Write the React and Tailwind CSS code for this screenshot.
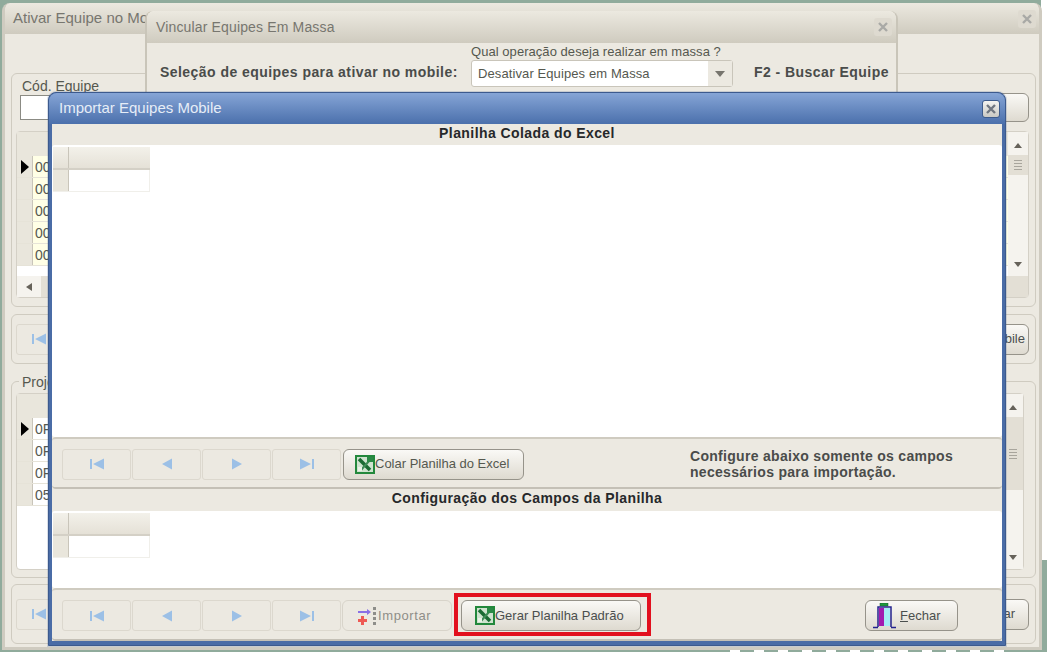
import React from 'react';

const font = { tahoma: 'font-["Liberation_Sans",sans-serif]' };

const CloseBox = ({ blue }) => (
  <div
    className={
      blue
        ? 'flex h-[18px] w-[18px] items-center justify-center rounded-[3px] border border-[#3d5c8c] bg-gradient-to-b from-[#f4f4f0] to-[#c9c9c4]'
        : 'flex h-[18px] w-[18px] items-center justify-center rounded-[3px] bg-[#dedad0]'
    }
  >
    <svg width="12" height="12" viewBox="0 0 12 12">
      <path d="M2 2 L10 10 M10 2 L2 10" stroke={blue ? '#6f7680' : '#a9a9a6'} strokeWidth="2.4" />
    </svg>
  </div>
);

const NavIcon = ({ type }) => {
  const c = '#9cc0e6';
  return (
    <svg width="16" height="14" viewBox="0 0 16 14">
      {type === 'first' && <path d="M1 2h2v10H1z M15 1.500v11L4 7z" fill={c} />}
      {type === 'prev' && <path d="M13 1.500v11L3 7z" fill={c} />}
      {type === 'next' && <path d="M3 1.500v11L13 7z" fill={c} />}
      {type === 'last' && <path d="M13 2h2v10h-2z M1 1.500v11L12 7z" fill={c} />}
    </svg>
  );
};

const NavBar = ({ w = 'w-[69px]' }) => (
  <div className="flex gap-px">
    {['first', 'prev', 'next', 'last'].map((t) => (
      <div key={t} className={`flex h-[31px] ${w} items-center justify-center rounded-[3px] border border-[#dcd8ce] bg-[#ece9e1]`}>
        <NavIcon type={t} />
      </div>
    ))}
  </div>
);

const ExcelIcon = () => (
  <svg width="20" height="19" viewBox="0 0 20 19" className="shrink-0">
    <rect x="1" y="1" width="18" height="17" fill="#cfe3cf" stroke="#23883c" strokeWidth="2" />
    <path d="M4 4 L15 15" stroke="#1b6a33" strokeWidth="3.500" />
    <path d="M15 5 L6 15" stroke="#3d8a55" strokeWidth="2" />
    <path d="M12 2h6v5h-6z" fill="#2b8a46" />
    <path d="M3 12h4v4H3z" fill="#e9f3e7" />
  </svg>
);

const ImportIcon = () => (
  <svg width="20" height="20" viewBox="0 0 20 20" className="shrink-0">
    <path d="M0 5h9V3l4 3-4 3V7H0z" fill="#8a70e6" />
    <path d="M3 10h3v3h3v3H6v3H3v-3H0v-3h3z" fill="#ee5a54" />
    <path d="M15 1h3v3h-3z M15 6h3v3h-3z M15 11h3v3h-3z M15 16h3v3h-3z" fill="#8e8e8a" />
  </svg>
);

const DoorIcon = () => (
  <svg width="24" height="26" viewBox="0 0 24 26" className="shrink-0">
    <rect x="7" y="0" width="8" height="3" fill="#1f9a3c" stroke="#14532d" strokeWidth="0.500" />
    <rect x="6" y="5" width="5" height="18" fill="#a21caf" />
    <rect x="11" y="5" width="6" height="18" fill="#a5ecf5" />
    <path d="M5 24V4h13v20 M0 24.500h5 M18 24.500h5" fill="none" stroke="#23238e" strokeWidth="1.500" />
  </svg>
);

const Btn = ({ className = '', children }) => (
  <div className={`flex h-[31px] items-center rounded-[6px] border border-[#96938a] bg-gradient-to-b from-[#faf9f6] to-[#dedad0] text-[13px] text-[#4b4f4e] ${className}`}>
    {children}
  </div>
);

const SmallGrid = () => (
  <div className="ml-px w-[97px] shrink-0">
    <div className="flex h-[23px] border-b-2 border-[#d4d0c6]">
      <div className="w-[16px] border-r border-[#c9c5ba] bg-gradient-to-b from-[#f3f1ea] to-[#e5e1d7]" />
      <div className="flex-1 bg-gradient-to-b from-[#f3f1ea] to-[#e5e1d7]" />
    </div>
    <div className="flex h-[22px] border-b border-[#f0efea]">
      <div className="w-[16px] border-r border-[#c9c5ba] bg-[#e9e6dc]" />
      <div className="flex-1 border-r border-[#f0efea] bg-white" />
    </div>
  </div>
);

const Group = ({ className = '', children }) => (
  <div className={`relative rounded-[6px] border border-[#cfcbc0] ${className}`}>{children}</div>
);

// row of the grids in the window at the back
const BackRow = ({ text, active, yellow }) => (
  <div className="flex h-[22px] border-b border-[#e6e3d8]">
    <div className="flex w-[16px] shrink-0 items-center justify-center border-r border-[#c9c5ba] bg-[#e9e6dc]">
      {active && (
        <svg width="8" height="14" viewBox="0 0 8 14">
          <path d="M0 0 L8 7 L0 14z" fill="#000" />
        </svg>
      )}
    </div>
    <div className={`flex-1 pl-[2px] text-[14px] leading-[22px] text-[#55584f] ${yellow ? 'bg-[#ffffe6]' : 'bg-white'}`}>{text}</div>
  </div>
);

const Scrollbar = ({ thumb, className = '' }) => (
  <div className={`flex w-[20px] shrink-0 flex-col items-center bg-[#f5f3ee] ${className}`}>
    <svg width="10" height="8" viewBox="0 0 10 8" className="mt-[10px]">
      <path d="M5 1 L9 6 H1z" fill="#66625a" />
    </svg>
    <div className={`mt-[5px] flex ${thumb} w-full flex-col items-center justify-center gap-[2px] bg-[#e3dfd5]`}>
      <div className="h-px w-[8px] bg-[#a8a59c]" />
      <div className="h-px w-[8px] bg-[#a8a59c]" />
      <div className="h-px w-[8px] bg-[#a8a59c]" />
      <div className="h-px w-[8px] bg-[#a8a59c]" />
    </div>
    <svg width="10" height="8" viewBox="0 0 10 8" className="mb-[8px] mt-auto">
      <path d="M5 7 L9 2 H1z" fill="#66625a" />
    </svg>
  </div>
);

const BackWindow = () => (
  <div className="absolute left-[2px] top-[3px] flex h-[647px] w-[1040px] flex-col rounded-t-[8px] border-x-[3px] border-b-[3px] border-[#cfcbc0] bg-[#ece9e1]">
    <div className="flex h-[31px] shrink-0 items-center justify-between rounded-t-[8px] bg-gradient-to-b from-[#ecE9e0] to-[#cfcbbf] pl-[8px] pr-[3px] text-[15px] text-[#77766f]">
      <span>Ativar Equipe no Mobile</span>
      <CloseBox />
    </div>
    <Group className="ml-[6px] mr-[3px] mt-[39px] h-[234px] shrink-0 pl-[4px] pr-[6px]">
      <div className="ml-[6px] mt-[3px] text-[14px] leading-[18px] text-[#55584f]">Cód. Equipe</div>
      <div className="flex justify-between">
        <div className="ml-[4px] h-[25px] w-[200px] border border-[#8b8b84] bg-white" />
        <div className="mt-[-2px] h-[29px] w-[60px] rounded-[6px] border border-[#96938a] bg-gradient-to-b from-[#faf9f6] to-[#dedad0]" />
      </div>
      <div className="mt-[9px] flex h-[167px] flex-col rounded-[4px] border border-[#d4d0c6] bg-white">
        <div className="flex min-h-0 flex-1">
          <div className="flex-1">
            <div className="h-[24px] bg-[#e9e6dc]" />
            {['00', '00', '00', '00', '00'].map((t, i) => (
              <BackRow key={i} text={t} active={i === 0} yellow />
            ))}
          </div>
          <Scrollbar thumb="h-[20px]" />
        </div>
        <div className="flex h-[21px] shrink-0 items-center bg-[#e3dfd5]">
          <div className="flex h-full w-[24px] items-center justify-center bg-[#f5f3ee]">
            <svg width="8" height="10" viewBox="0 0 8 10">
              <path d="M1 5 L7 1 V9z" fill="#66625a" />
            </svg>
          </div>
        </div>
      </div>
    </Group>
    <Group className="ml-[6px] mr-[3px] mt-[7px] flex h-[50px] shrink-0 items-center justify-between pl-[4px] pr-[6px]">
      <NavBar w="w-[46px]" />
      <Btn className="w-[60px] justify-end pr-[3px]">bile</Btn>
    </Group>
    <Group className="ml-[6px] mr-[3px] mt-[17px] h-[197px] shrink-0 pl-[4px] pr-[11px]">
      <div className="absolute left-[7px] top-[-9px] bg-[#ece9e1] px-[3px] text-[14px] leading-[18px] text-[#55584f]">Projetos</div>
      <div className="mt-[11px] flex h-[177px] rounded-[4px] border border-[#d4d0c6] bg-white">
        <div className="flex-1">
          <div className="h-[24px] bg-[#e9e6dc]" />
          {['0F', '0F', '0F', '05'].map((t, i) => (
            <BackRow key={i} text={t} active={i === 0} />
          ))}
        </div>
        <Scrollbar thumb="h-[73px]" />
      </div>
    </Group>
    <Group className="ml-[6px] mr-[3px] mt-[6px] flex h-[60px] shrink-0 items-center justify-between pl-[4px] pr-[6px]">
      <NavBar w="w-[46px]" />
      <Btn className="w-[60px] justify-end pr-[13px]">ar</Btn>
    </Group>
  </div>
);

const MiddleWindow = () => (
  <div className="absolute left-[145px] top-[11px] flex h-[110px] w-[753px] flex-col rounded-t-[8px] border-x-[2px] border-[#c9c5b9] bg-[#ece9e1]">
    <div className="flex h-[32px] shrink-0 items-center justify-between rounded-t-[8px] bg-gradient-to-b from-[#ecE9e0] to-[#cfcbbf] pl-[9px] pr-[4px] text-[14px] tracking-[0.15px] text-[#77766f]">
      <span>Vincular Equipes Em Massa</span>
      <CloseBox />
    </div>
    <div className="flex items-start pl-[13px]">
      <div className="mt-[20px] w-[311px] whitespace-nowrap text-[14px] font-bold leading-[18px] tracking-[0.45px] text-[#4a4c4a]">Seleção de equipes para ativar no mobile:</div>
      <div className="w-[262px] shrink-0">
        <div className="mt-[1px] whitespace-nowrap text-[13px] leading-[16px] tracking-[0.05px] text-[#55584f]">Qual operação deseja realizar em massa ?</div>
        <div className="flex h-[27px] items-center justify-between rounded-[3px] border border-[#c9c5ba] bg-white pl-[6px] text-[13px] tracking-[0.1px] text-[#55584f]">
          <span>Desativar Equipes em Massa</span>
          <div className="flex h-full w-[24px] items-center justify-center bg-[#ece9e1]">
            <svg width="10" height="6" viewBox="0 0 10 6">
              <path d="M0 0 H10 L5 6z" fill="#77756e" />
            </svg>
          </div>
        </div>
      </div>
      <div className="ml-[21px] mt-[20px] whitespace-nowrap text-[14px] font-bold leading-[18px] tracking-[0.45px] text-[#4a4c4a]">F2 - Buscar Equipe</div>
    </div>
  </div>
);

const SectionTitle = ({ h, children }) => (
  <div className={`${h} shrink-0 text-center text-[14px] font-bold leading-[19px] tracking-[0.42px] text-[#26282a]`}>{children}</div>
);

const ToolPanel = ({ children, h }) => (
  <div className={`flex ${h} shrink-0 items-center rounded-[4px] border-y-2 border-t-[#cfcbc0] border-b-[#c4c0b6] pl-[10px] pr-[2px] pt-[2px]`}>{children}</div>
);

const FrontWindow = () => (
  <div className="absolute left-[48px] top-[92px] flex h-[554px] w-[958px] flex-col rounded-t-[8px] border border-[#3c5a8e] bg-[#4a6ca6] shadow-[0_0_0_1px_rgba(60,90,140,0.2)]">
    <div className="flex h-[31px] shrink-0 items-center justify-between rounded-t-[8px] bg-gradient-to-b from-[#86a5d6] to-[#4b70ac] pl-[10px] pr-[5px] text-[15px] text-[#e6edf7]">
      <span>Importar Equipes Mobile</span>
      <CloseBox blue />
    </div>
    <div className="mx-[3px] mb-[4px] flex min-h-0 flex-1 flex-col bg-[#ece9e1]">
      <SectionTitle h="h-[21px]">Planilha Colada do Excel</SectionTitle>
      <div className="flex h-[292px] shrink-0 rounded-[3px] bg-white pt-[2px]">
        <SmallGrid />
      </div>
      <ToolPanel h="h-[52px]">
        <NavBar />
        <Btn className="ml-[2px] w-[181px] pl-[11px] text-[#55584f]">
          <ExcelIcon />
          <span className="whitespace-nowrap">Colar Planilha do Excel</span>
        </Btn>
        <div className="ml-[166px] whitespace-pre text-[14px] font-bold leading-[16px] tracking-[0.3px] text-[#4a4c4a]">
          {'Configure abaixo somente os campos\nnecessários para importação.'}
        </div>
      </ToolPanel>
      <SectionTitle h="h-[22px]">Configuração dos Campos da Planilha</SectionTitle>
      <div className="flex h-[77px] shrink-0 rounded-[3px] bg-white pt-[2px]">
        <SmallGrid />
      </div>
      <ToolPanel h="h-[53px]">
        <NavBar />
        <Btn className="ml-[1px] w-[110px] border-[#d8d4ca] bg-none pl-[15px] tracking-[0.6px] text-[#8f8e88]">
          <ImportIcon />
          <span>Importar</span>
        </Btn>
        <div className="relative ml-[9px]">
          <Btn className="w-[180px] pl-[13px]">
            <ExcelIcon />
            <span className="whitespace-nowrap">Gerar Planilha Padrão</span>
          </Btn>
          <div className="absolute bottom-[-5px] left-[-7px] right-[-10px] top-[-7px] border-[4px] border-[#e2101e]" />
        </div>
        <Btn className="ml-[224px] w-[93px] gap-[3px] pl-[7px]">
          <DoorIcon />
          <span><span className="underline">F</span>echar</span>
        </Btn>
      </ToolPanel>
    </div>
  </div>
);

export default function App() {
  return (
    <div className={`relative h-[652px] w-[1047px] overflow-hidden bg-[#90ab9c] ${font.tahoma}`}>
      <div className="absolute right-0 top-0 h-[560px] w-[6px] bg-white" />
      <div className="absolute bottom-0 left-[730px] flex h-[2px] gap-[14px]">
        {[1, 2, 3, 4, 5, 6, 7, 8, 9, 10, 11, 12].map((n) => (
          <div key={n} className="w-[10px] bg-white" />
        ))}
      </div>
      <BackWindow />
      <MiddleWindow />
      <FrontWindow />
    </div>
  );
}
